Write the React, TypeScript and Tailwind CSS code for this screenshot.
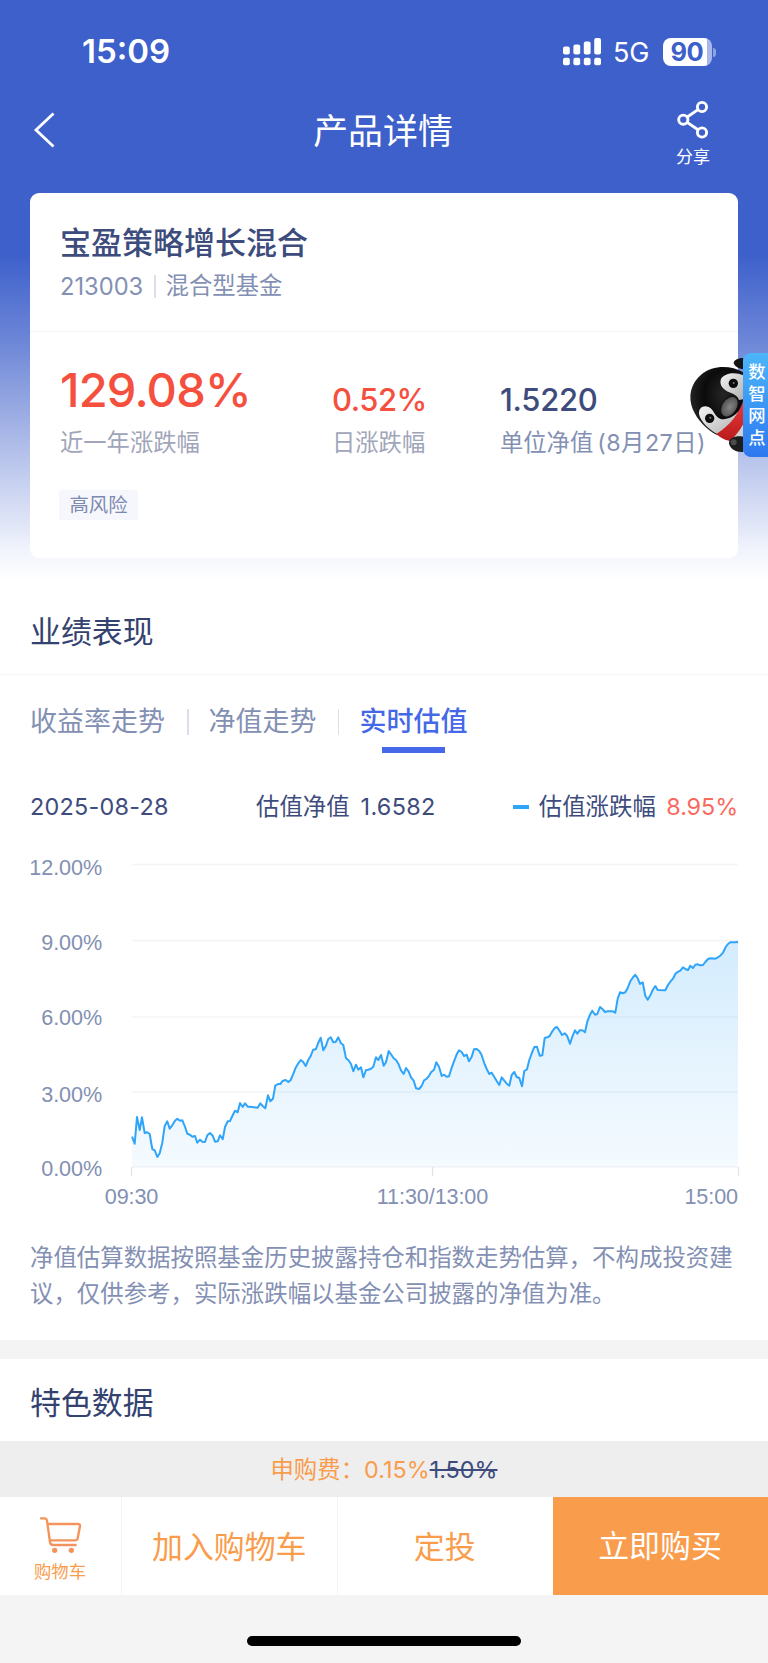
import type { ReactNode } from "react"

// [x, y] vertices of the intraday estimate, in thirds of a pixel
const TREND: [number, number][] = [
  [396, 890], [404, 911], [411, 831], [419, 870], [426, 832], [434, 879], [442, 877], [449, 882],
  [457, 927], [464, 931], [472, 951], [479, 940], [487, 908], [494, 858], [502, 844], [509, 866],
  [517, 856], [525, 842], [532, 836], [540, 842], [547, 841], [555, 860], [562, 881], [570, 884],
  [577, 890], [585, 888], [592, 908], [600, 899], [607, 905], [615, 906], [622, 886], [630, 879],
  [638, 887], [645, 905], [653, 904], [660, 886], [668, 898], [675, 861], [683, 844], [690, 843],
  [698, 826], [705, 812], [713, 817], [720, 789], [728, 801], [735, 790], [743, 800], [750, 800],
  [773, 803], [781, 790], [788, 798], [796, 805], [804, 766], [811, 784], [819, 776], [826, 737],
  [834, 732], [841, 732], [849, 722], [857, 720], [865, 726], [872, 720], [879, 704], [887, 683],
  [895, 670], [902, 660], [909, 665], [917, 678], [925, 660], [932, 648], [939, 630], [948, 627],
  [955, 608], [962, 593], [970, 631], [977, 619], [985, 597], [992, 592], [1000, 607], [1007, 606],
  [1015, 592], [1023, 610], [1030, 615], [1038, 655], [1045, 660], [1053, 672], [1060, 694], [1068, 674],
  [1075, 689], [1083, 682], [1090, 712], [1098, 690], [1105, 689], [1113, 686], [1120, 680], [1128, 652],
  [1135, 660], [1143, 645], [1151, 677], [1158, 667], [1166, 633], [1173, 643], [1181, 655], [1188, 660],
  [1195, 671], [1203, 691], [1211, 702], [1218, 684], [1226, 695], [1233, 712], [1241, 722], [1248, 745],
  [1257, 747], [1265, 738], [1272, 721], [1279, 717], [1286, 709], [1294, 696], [1302, 689], [1309, 667],
  [1317, 680], [1325, 708], [1332, 704], [1340, 710], [1347, 709], [1355, 683], [1362, 664], [1370, 643],
  [1377, 631], [1385, 636], [1392, 648], [1400, 644], [1407, 664], [1415, 650], [1422, 628], [1430, 627],
  [1438, 633], [1445, 646], [1453, 670], [1460, 687], [1468, 702], [1475, 698], [1483, 711], [1490, 723],
  [1498, 735], [1505, 712], [1513, 722], [1520, 731], [1528, 737], [1535, 705], [1543, 696], [1550, 711],
  [1558, 714], [1566, 739], [1573, 693], [1581, 688], [1588, 660], [1596, 638], [1603, 621], [1611, 620],
  [1619, 647], [1627, 646], [1634, 594], [1642, 592], [1649, 588], [1657, 574], [1664, 564], [1671, 561],
  [1679, 573], [1686, 585], [1694, 580], [1701, 587], [1710, 611], [1717, 590], [1725, 571], [1732, 581],
  [1739, 571], [1747, 571], [1755, 577], [1762, 545], [1770, 524], [1777, 512], [1785, 524], [1792, 522],
  [1800, 501], [1808, 508], [1815, 516], [1823, 514], [1838, 514], [1846, 518], [1853, 476], [1860, 457],
  [1868, 460], [1876, 457], [1883, 444], [1891, 424], [1898, 413], [1906, 404], [1913, 415], [1920, 432],
  [1928, 427], [1936, 467], [1943, 479], [1951, 466], [1958, 450], [1966, 438], [1973, 450], [1996, 451],
  [2004, 435], [2011, 425], [2019, 416], [2027, 400], [2035, 395], [2041, 392], [2049, 382], [2057, 388],
  [2064, 390], [2071, 377], [2079, 384], [2086, 374], [2094, 373], [2101, 376], [2109, 375], [2116, 366],
  [2124, 357], [2132, 355], [2146, 356], [2154, 352], [2162, 346], [2169, 338], [2177, 321], [2184, 312],
  [2191, 307], [2207, 307], [2214, 305],
]

const Y_TICKS = [
  { label: "12.00%", line: 24.5, text: 35 },
  { label: "9.00%", line: 100.5, text: 110 },
  { label: "6.00%", line: 177, text: 184.5 },
  { label: "3.00%", line: 252, text: 261.5 },
  { label: "0.00%", line: 327, text: 336 },
]

const linePoints = TREND.map(([x, y]) => `${(x / 3).toFixed(1)},${(y / 3).toFixed(1)}`).join(" ")

function TrendChart() {
  return (
    <svg
      className="block h-[380px] w-full"
      viewBox="0 0 768 380"
      fontFamily="'Liberation Sans', Arial, sans-serif"
      fontSize={21.6}
      letterSpacing={-0.1}
      fill="#8390b3"
    >
      <defs>
        <linearGradient id="area" x1="0" y1="100" x2="0" y2="327" gradientUnits="userSpaceOnUse">
          <stop offset="0" stopColor="#2fa4f7" stopOpacity={0.21} />
          <stop offset="1" stopColor="#2fa4f7" stopOpacity={0.05} />
        </linearGradient>
      </defs>
      {Y_TICKS.map((t) => (
        <g key={t.label}>
          <line x1={132} x2={738} y1={t.line} y2={t.line} stroke="#f4f4f6" strokeWidth={1.6} />
          <text x={102} y={t.text} textAnchor="end">{t.label}</text>
        </g>
      ))}
      {[131.5, 432.5, 738.5].map((x) => (
        <line key={x} x1={x} x2={x} y1={327} y2={336} stroke="#dfe2ec" strokeWidth={1.2} />
      ))}
      <polygon points={`132,327 ${linePoints} 738,327`} fill="url(#area)" />
      <polyline points={linePoints} fill="none" stroke="#2fa4fb" strokeWidth={2} strokeLinejoin="round" />
      <text x={131.5} y={363.5} textAnchor="middle">09:30</text>
      <text x={432.5} y={363.5} textAnchor="middle">11:30/13:00</text>
      <text x={738} y={363.5} textAnchor="end">15:00</text>
    </svg>
  )
}

function SignalIcon() {
  const bars = [
    { x: 0, y: 8.5 },
    { x: 10.4, y: 6.5 },
    { x: 20.8, y: 3.5 },
    { x: 31.2, y: 0 },
  ]
  return (
    <svg width={38} height={28} viewBox="0 0 38 28" fill="#fff">
      {bars.map((b) => (
        <g key={b.x}>
          <rect x={b.x} y={b.y} width={6.8} height={16.5 - b.y} rx={2} />
          <rect x={b.x} y={19.7} width={6.8} height={7.5} rx={2} />
        </g>
      ))}
    </svg>
  )
}

function ShareIcon() {
  return (
    <svg width={34} height={40} viewBox="0 0 34 40" fill="none" stroke="#fff" strokeWidth={2.9}>
      <circle cx={26} cy={7} r={4.6} />
      <circle cx={7.3} cy={19.7} r={4.6} />
      <circle cx={26} cy={32.5} r={4.6} />
      <path d="M11.2 17 22 9.6M11.2 22.4 22 29.8" />
    </svg>
  )
}

function CartIcon() {
  return (
    <svg width={44} height={40} viewBox="0 0 132 120" fill="none" stroke="#f4945c" strokeWidth={7} strokeLinecap="round" strokeLinejoin="round">
      <path d="M9 10H19Q26 10 27 17L36 81Q37 90 46 90H113" />
      <path d="M32 27H120Q127 27 126 34L119 70Q118 76 111 76H38" />
      <circle cx={50} cy={106} r={8} fill="#f4945c" stroke="none" />
      <circle cx={100} cy={106} r={8} fill="#f4945c" stroke="none" />
    </svg>
  )
}

function Penguin() {
  return (
    <svg className="absolute top-0 left-0" width={80} height={130} viewBox="0 0 240 390">
      <defs>
        <radialGradient id="head" cx="0.62" cy="0.4" r="0.72">
          <stop offset="0" stopColor="#262626" />
          <stop offset="0.5" stopColor="#0b0b0b" />
          <stop offset="0.86" stopColor="#222" />
          <stop offset="1" stopColor="#5d5d5d" />
        </radialGradient>
        <linearGradient id="face" x1="0" y1="0" x2="1" y2="1">
          <stop offset="0" stopColor="#f4f4f4" />
          <stop offset="1" stopColor="#b0b0b0" />
        </linearGradient>
        <radialGradient id="beak" cx="0.55" cy="0.5" r="0.6">
          <stop offset="0" stopColor="#858585" />
          <stop offset="1" stopColor="#4c4c4c" />
        </radialGradient>
        <linearGradient id="scarf" x1="0" y1="0" x2="0" y2="1">
          <stop offset="0" stopColor="#ef3b3b" />
          <stop offset="1" stopColor="#b81a1c" />
        </linearGradient>
      </defs>
      <path d="M220 54C206 54 192 60 191 68C192 78 206 86 220 88Z" fill="#151515" />
      <path d="M180 290L220 240V315L190 312Z" fill="#d3d0d2" />
      <path d="M220 97C180 74 128 76 95 103C60 132 54 172 68 207C82 240 108 268 142 286L180 260L220 190Z" fill="url(#head)" />
      <path d="M220 106C196 95 164 99 153 117C147 134 158 148 178 157C194 163 204 170 207 180L220 178Z" fill="url(#face)" />
      <path d="M142 282C116 268 92 246 87 222C86 203 100 195 116 201C131 207 132 228 150 236C166 241 188 234 206 214L182 256Z" fill="url(#face)" />
      <ellipse cx={178} cy={199} rx={24} ry={35} transform="rotate(33 178 199)" fill="#151515" />
      <ellipse cx={178} cy={200} rx={21} ry={32} transform="rotate(33 178 200)" fill="url(#beak)" />
      <circle cx={190} cy={130} r={14} fill="#0c0c0c" />
      <circle cx={119} cy={235} r={14} fill="#0c0c0c" />
      <circle cx={191} cy={129} r={3} fill="#777" />
      <circle cx={121} cy={233} r={3} fill="#777" />
      <path d="M220 180C212 216 178 258 139 282C148 291 164 300 180 303C194 292 210 270 220 252Z" fill="url(#scarf)" />
      <path d="M220 290C200 286 176 292 177 310C180 328 200 338 220 336Z" fill="#1d1d1d" />
      <circle cx={191} cy={307} r={9} fill="#4b4b4b" />
    </svg>
  )
}

function AssistantTab() {
  return (
    <div className="absolute top-[340px] left-[670px] h-[130px] w-[98px]">
      <Penguin />
      <div className="absolute top-[13px] right-0 flex h-[104px] w-[25px] flex-col items-center rounded-l-[8px] bg-linear-to-b from-[#4db5f9] to-[#2f78f0] pt-[8px] pl-[3px] text-[17.3px] leading-[21.9px] font-medium text-white">
        {["数", "智", "网", "点"].map((c) => <span key={c}>{c}</span>)}
      </div>
    </div>
  )
}

function Divider({ className }: { className: string }) {
  return <span className={`w-[1.5px] shrink-0 bg-[#dcdfea] ${className}`} />
}

function SectionTitle({ children }: { children: ReactNode }) {
  return <h2 className="text-[30.9px] leading-[40px] text-[#34426f]">{children}</h2>
}

export default function App() {
  return (
    <div className="relative h-[1663px] w-[768px] overflow-hidden bg-white font-['Inter','Noto_Sans_CJK_SC',sans-serif]">
      <div className="h-[580px] bg-[linear-gradient(to_bottom,#3e60cb_0px,#3e60cb_255px,#6c86d7_340px,#a3b2e5_425px,#cbd4f1_490px,#f1f4fc_550px,#ffffff_580px)]">
        {/* status bar */}
        <div className="flex h-[101px] items-start justify-between pt-[31px] pr-[52px] pl-[82px] text-white">
          <span className="text-[33px] leading-[40px] font-semibold">15:09</span>
          <div className="flex items-center pt-[6px]">
            <SignalIcon />
            <span className="ml-[12px] pt-[2px] text-[27px] leading-[28px]">5G</span>
            <div className="ml-[13px] flex items-center">
              <span className="h-[28px] w-[49px] rounded-[8px] bg-[linear-gradient(to_right,#fff_44.5px,#a9b8e8_44.5px)] pl-[8px] text-[25.5px] leading-[28px] font-bold tracking-[-0.5px] text-[#3e60cb]">90</span>
              <span className="ml-[1.5px] h-[9px] w-[3px] rounded-r-full bg-[#8fa3e0]" />
            </div>
          </div>
        </div>

        {/* nav bar */}
        <div className="flex h-[92px] items-start justify-between pr-[56px] pl-[33px] text-white">
          <svg className="mt-[11px] mr-[18px]" width={22} height={36} viewBox="0 0 22 36" fill="none" stroke="#fff" strokeWidth={2.8}>
            <path d="M20.5 1.5 3 18l17.5 16.5" />
          </svg>
          <h1 className="mt-[7px] -mr-[19px] text-[34.9px] leading-[46px]">产品详情</h1>
          <div className="-mt-px flex w-[38px] flex-col items-center">
            <ShareIcon />
            <span className="mt-[7px] text-[17px] leading-[20px]">分享</span>
          </div>
        </div>

        {/* fund summary */}
        <div className="mx-[30px] h-[365px] rounded-[9px] bg-white">
          <div className="h-[138.5px] border-b-[1.5px] border-[#f4f4f6] pt-[30px] pl-[30px]">
            <div className="text-[31px] leading-[40px] font-medium text-[#3d4c7c]">宝盈策略增长混合</div>
            <div className="mt-[7px] flex h-[32px] items-center text-[23.4px] leading-[32px] text-[#8390b3]">
              <span className="w-[94px] pt-[2px] text-[23.7px]">213003</span>
              <Divider className="h-[23px]" />
              <span className="ml-[10px]">混合型基金</span>
            </div>
          </div>
          <div className="flex h-[158px] items-end pb-[31px] pl-[30px]">
            <div className="w-[272px]">
              <div className="text-[47px] leading-[56px] font-medium tracking-[-0.8px] text-[#f5503e]">129.08%</div>
              <div className="mt-[8.5px] text-[23.3px] leading-[32px] text-[#a0a5b9]">近一年涨跌幅</div>
            </div>
            <div className="w-[168px]">
              <div className="text-[31px] leading-[38px] font-medium tracking-[-0.5px] text-[#f5503e]">0.52%</div>
              <div className="mt-[8px] text-[23.3px] leading-[32px] text-[#a0a5b9]">日涨跌幅</div>
            </div>
            <div>
              <div className="text-[31px] leading-[38px] font-medium tracking-[-0.3px] text-[#3d4c7c]">1.5220</div>
              <div className="mt-[8px] text-[23.3px] leading-[32px] whitespace-nowrap text-[#8390b3]">
                单位净值<span className="ml-[4px] tracking-[0.5px]">(8月27日)</span>
              </div>
            </div>
          </div>
          <span className="ml-[29px] flex h-[30px] w-[79px] items-center justify-center rounded-[3px] bg-[#f6f7fd] pt-[2px] text-[19.4px] text-[#7d8ab0]">高风险</span>
        </div>
      </div>

      {/* performance */}
      <div className="flex h-[95px] items-center border-b-[1.5px] border-[#f6f6f8] px-[30px] pt-[9px]">
        <SectionTitle>业绩表现</SectionTitle>
      </div>
      <div className="flex h-[80px] items-start px-[30px] pt-[29px] text-[27px] leading-[36px] text-[#8390b3]">
        <span>收益率走势</span>
        <Divider className="mt-[5px] ml-[22px] h-[26px]" />
        <span className="ml-[20px]">净值走势</span>
        <Divider className="mt-[5px] ml-[21px] h-[26px]" />
        <div className="ml-[20.5px] flex flex-col items-center font-medium text-[#4468e8]">
          实时估值
          <span className="mt-[7px] h-[6px] w-[63px] bg-[#4468e8]" />
        </div>
      </div>

      <div className="flex h-[85px] items-center px-[30px] pt-[19px] text-[23.4px] leading-[32px] whitespace-nowrap text-[#3d4c7c]">
        <span className="w-[226px] tracking-[0.25px]">2025-08-28</span>
        <span>估值净值</span>
        <span className="ml-[11px] tracking-[0.3px]">1.6582</span>
        <span className="ml-auto h-[4.5px] w-[16px] bg-[#2fa4fb]" />
        <span className="ml-[9.5px]">估值涨跌幅</span>
        <span className="ml-[10.5px] tracking-[-0.1px] text-[#f96a5c]">8.95%</span>
      </div>

      <TrendChart />

      <div className="h-[119.5px] px-[30px] pt-[20px] text-[23.43px] leading-[35.5px] whitespace-nowrap text-[#8390b3]">
        <p>净值估算数据按照基金历史披露持仓和指数走势估算，不构成投资建</p>
        <p>议，仅供参考，实际涨跌幅以基金公司披露的净值为准。</p>
      </div>
      <div className="h-[19.5px] bg-[#f4f4f4]" />
      <div className="flex h-[82px] items-center px-[30px] pt-[6px]">
        <SectionTitle>特色数据</SectionTitle>
      </div>

      {/* purchase bar */}
      <div className="flex h-[56px] items-center justify-center bg-[#eeeeee] pt-[2px] text-[23.4px] text-[#f99c4c]">
        申购费：0.15%<span className="text-[#3d4c7c] line-through">1.50%</span>
      </div>
      <div className="flex h-[98px] text-[30.9px] text-[#f99c4c]">
        <div className="flex w-[122px] flex-col items-center border-r-[1.5px] border-[#f4f4f4] pt-[18px] pr-[1px]">
          <CartIcon />
          <span className="mt-[6px] text-[17.3px] leading-[22px]">购物车</span>
        </div>
        <div className="flex w-[215.5px] items-center justify-center border-r-[1.5px] border-[#f4f4f4] pt-[2px]">加入购物车</div>
        <div className="flex w-[215.5px] items-center justify-center pt-[2px] pr-[1px]">定投</div>
        <div className="flex flex-1 items-center justify-center bg-[#f99c4c] pt-[1px] pr-[1px] text-white">立即购买</div>
      </div>
      <div className="flex h-[68px] justify-center bg-[#f4f4f4] pt-[41px]">
        <span className="h-[10px] w-[274px] rounded-full bg-black" />
      </div>

      <AssistantTab />
    </div>
  )
}
